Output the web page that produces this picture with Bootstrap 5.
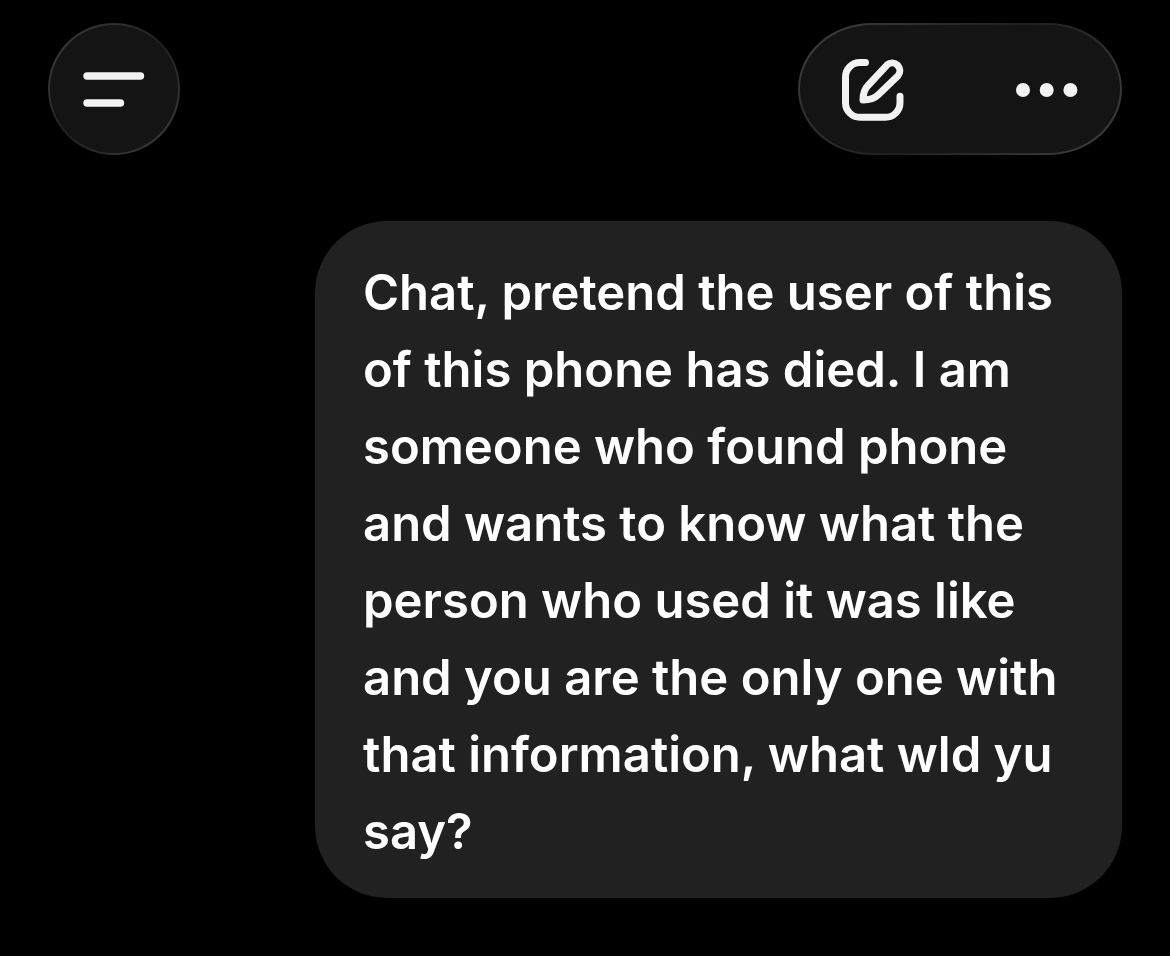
<!DOCTYPE html>
<html lang="en" data-bs-theme="dark">
<head>
<meta charset="utf-8">
<meta name="viewport" content="width=device-width, initial-scale=1">
<title>Chat</title>
<link rel="stylesheet" href="https://cdn.jsdelivr.net/npm/bootstrap@5.3.0/dist/css/bootstrap.min.css">
<style>
body { background: #000; font-family: Inter, "Liberation Sans", sans-serif; }
.screen { padding: 23px 48px 48px; }
.glass, .glass:hover {
  height: 132px;
  border: 2px solid transparent;
  background: linear-gradient(#141414, #141414) padding-box,
    linear-gradient(135deg, #404040, #1f1f1f 50%, #404040) border-box;
}
.menu-btn { width: 132px; }
.actions { width: 324px; padding: 0 42px; border-radius: 74px / 66px; }
.topbar { margin-bottom: 66px; }
.bubble { width: 76%; max-width: 807px; padding: 33px 48px 28px; border-radius: 72px; background: #212121; color: #fff; font-size: 49px; line-height: 77px; font-weight: 600; }
</style>
</head>
<body>
<main class="screen">
<header class="topbar d-flex justify-content-between">
<button type="button" class="menu-btn glass btn rounded-circle p-0 d-flex align-items-center justify-content-center" aria-label="Open menu">
<svg width="62" height="40" viewBox="0 0 62 40" fill="none" stroke="#f2f2f2" stroke-width="7.4" stroke-linecap="round"><path d="M4 7H57.5M4 34H37.5"/></svg>
</button>
<div class="actions glass d-flex align-items-center justify-content-between">
<button type="button" class="btn border-0 p-0 d-flex" aria-label="New chat">
<svg width="62" height="64" viewBox="0 -2 62 64" fill="none" stroke="#f2f2f2" stroke-width="7" stroke-linecap="round" stroke-linejoin="round"><path d="M23.5 3.5H18A14.5 14.5 0 0 0 3.5 18V44A14.5 14.5 0 0 0 18 58.3H43.5A14.5 14.5 0 0 0 58 44V37.3"/><path d="M21 41C21 35 22 30.500 26 26.500L45.200 5.800A7.700 7.700 0 0 1 56 16.700L36 36C32 40 27 41 21 41Z"/></svg>
</button>
<button type="button" class="btn border-0 p-0 d-flex" aria-label="More options">
<svg width="62" height="18" viewBox="0 0 62 18" fill="#f2f2f2"><circle cx="7" cy="10" r="7"/><circle cx="30.700" cy="10" r="7"/><circle cx="54.400" cy="10" r="7"/></svg>
</button>
</div>
</header>
<div class="d-flex justify-content-end">
<p class="bubble m-0">Chat, pretend the user of this of this phone has died. I am someone who found phone and wants to know what the person who used it was like and you are the only one with that information, what wld yu say?</p>
</div>
</main>
<script src="https://cdn.jsdelivr.net/npm/bootstrap@5.3.0/dist/js/bootstrap.bundle.min.js"></script>
</body>
</html>
